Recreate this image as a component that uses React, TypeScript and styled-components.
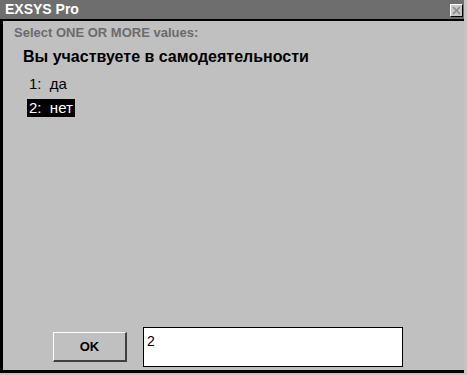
import React from 'react';
import styled, { createGlobalStyle } from 'styled-components';

const GlobalStyle = createGlobalStyle`
  html, body {
    margin: 0;
    padding: 0;
    background: #c4c4c4;
  }
  body {
    font-family: "Liberation Sans", Arial, sans-serif;
  }
`;

interface Option {
  id: number,
  label: string,
  selected: boolean,
}

const options: Option[] = [
  { id: 1, label: 'да', selected: false },
  { id: 2, label: 'нет', selected: true },
];

const App: React.FC = () => {
  return (
    <>
      <GlobalStyle />
      <Window>
        <TitleBar>
          <Title>EXSYS Pro</Title>
          <CloseButton aria-label="close">
            <svg width="9" height="9" viewBox="0 0 9 9">
              <path d="M1 1 L8 8 M8 1 L1 8" stroke="#8a8a8a" strokeWidth="1.6" />
            </svg>
          </CloseButton>
        </TitleBar>
        <Body>
          <Hint>Select ONE OR MORE values:</Hint>
          <Question>Вы участвуете в самодеятельности</Question>
          <OptionList>
            {options.map(({ id, label, selected }) => (
              <li key={id}>
                <OptionItem $selected={selected}>{`${id}:  ${label}`}</OptionItem>
              </li>
            ))}
          </OptionList>
          <Footer>
            <OkButton>OK</OkButton>
            <Answer>2</Answer>
          </Footer>
        </Body>
      </Window>
    </>
  );
};

const Window = styled.div`
  width: 464px;
  height: 373px;
  display: flex;
  flex-direction: column;
  background: #c0c0c0;
`;

const TitleBar = styled.div`
  height: 19px;
  display: flex;
  align-items: center;
  justify-content: space-between;
  padding: 0 1px 0 5px;
  background: #6e6e6e;
  border-bottom: 2px solid #000;
`;

const Title = styled.span`
  color: #fff;
  font-size: 14px;
  font-weight: 700;
  line-height: 19px;
`;

const CloseButton = styled.div`
  width: 13px;
  height: 13px;
  box-sizing: border-box;
  display: flex;
  align-items: center;
  justify-content: center;
  background: #c8c8c8;
  border-top: 1px solid #fff;
  border-left: 1px solid #fff;
  border-right: 1px solid #000;
  border-bottom: 1px solid #000;
  margin-top: 1px;
`;

const Body = styled.div`
  flex: 1;
  display: flex;
  flex-direction: column;
  padding: 4px 0 0 11px;
  border-left: 3px solid #000;
  border-bottom: 3px solid #000;
`;

const Hint = styled.div`
  font-size: 13px;
  font-weight: 700;
  line-height: 16px;
  color: #6b6b6b;
`;

const Question = styled.h2`
  margin: 6px 0 0 9px;
  font-size: 16px;
  font-weight: 700;
  line-height: 19px;
  color: #000;
`;

const OptionList = styled.ul`
  list-style: none;
  margin: 9px 0 0 13px;
  padding: 0;
  display: flex;
  flex-direction: column;
  gap: 6px;
`;

const OptionItem = styled.span<{ $selected: boolean }>`
  display: inline-block;
  padding: 0 2px;
  font-size: 15px;
  line-height: 18px;
  white-space: pre;
  color: ${({ $selected }) => ($selected ? '#fff' : '#000')};
  background: ${({ $selected }) => ($selected ? '#000' : 'transparent')};
`;

const Footer = styled.div`
  margin-top: auto;
  display: flex;
  align-items: center;
  gap: 16px;
  padding: 0 0 3px 39px;
`;

const OkButton = styled.div`
  width: 74px;
  height: 30px;
  box-sizing: border-box;
  display: flex;
  align-items: center;
  justify-content: center;
  font-size: 13px;
  font-weight: 700;
  color: #000;
  background: #c0c0c0;
  border-top: 1px solid #fff;
  border-left: 1px solid #fff;
  border-right: 2px solid #404040;
  border-bottom: 2px solid #404040;
`;

const Answer = styled.div`
  width: 260px;
  height: 40px;
  box-sizing: border-box;
  padding: 5px 0 0 3px;
  background: #fff;
  border: 1px solid #000;
  font-size: 14px;
  line-height: 16px;
  color: #000;
`;

export default App;
